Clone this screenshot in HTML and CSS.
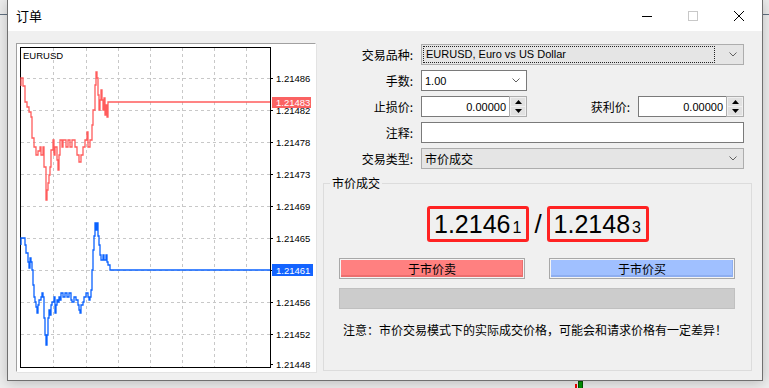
FILE: index.html
```html
<!DOCTYPE html>
<html lang="zh-CN">
<head>
<meta charset="utf-8">
<title>订单</title>
<link rel="stylesheet" href="styles.css">
</head>
<body>
<div class="desk">
  <div class="window">
    <div class="titlebar">
      <span class="title">订单</span>
      <div class="ctrls">
        <span class="cbtn"><svg width="10" height="10" viewBox="0 0 10 10"><path d="M0 5.5H10" stroke="#000" stroke-width="1"/></svg></span>
        <span class="cbtn"><svg width="10" height="10" viewBox="0 0 10 10"><rect x="0.5" y="0.5" width="9" height="9" fill="none" stroke="#c8c8c8"/></svg></span>
        <span class="cbtn"><svg width="10" height="10" viewBox="0 0 10 10"><path d="M0 0L10 10M10 0L0 10" stroke="#000" stroke-width="1"/></svg></span>
      </div>
    </div>
    <div class="body">
      <div class="chart">
        <svg width="298" height="327" viewBox="0 0 298 327">
          <g transform="translate(-17,-44)">
            <g class="grid">
              <path d="M53.5 48V367M86.5 48V367M118.5 48V367M150.5 48V367M182.5 48V367M214.5 48V367M246.5 48V367"/>
              <path d="M21 78.5H270M21 110.5H270M21 142.5H270M21 174.5H270M21 206.5H270M21 238.5H270M21 270.5H270M21 302.5H270M21 334.5H270"/>
            </g>
            <rect x="20.5" y="47.5" width="250" height="320" fill="none" stroke="#000"/>
            <path d="M270 78.5H273M270 110.5H273M270 142.5H273M270 174.5H273M270 206.5H273M270 238.5H273M270 270.5H273M270 302.5H273M270 334.5H273M270 364.5H273" stroke="#000"/>
            <g class="axis">
              <text x="276" y="82">1.21486</text>
              <text x="276" y="114">1.21482</text>
              <text x="276" y="146">1.21478</text>
              <text x="276" y="178">1.21473</text>
              <text x="276" y="210">1.21469</text>
              <text x="276" y="242">1.21465</text>
              <text x="276" y="306">1.21456</text>
              <text x="276" y="338">1.21452</text>
              <text x="276" y="368">1.21448</text>
            </g>
            <text class="sym" x="23" y="59">EURUSD</text>
            <polyline class="ask" points="21,86 21,78 23,78 23,86 25,86 25,102 27,102 27,107 29,107 29,112 31,112 31,117 32,117 32,138 34,138 34,147 36,147 36,155 38,155 38,151 40,151 40,147 41,147 41,155 43,155 43,147 44,147 44,167 46,167 46,200 47,200 47,190 48,190 48,183 49,183 49,175 50,175 50,167 51,167 51,150 53,150 53,140 54,140 54,155 55,155 55,147 57,147 57,160 58,160 58,170 59,170 59,155 60,155 60,140 62,140 62,147 63,147 63,140 66,140 66,147 68,147 68,140 70,140 70,147 72,147 72,140 75,140 75,147 77,147 77,155 79,155 79,162 81,162 81,155 83,155 83,147 85,147 85,140 87,140 87,132 88,132 88,147 90,147 90,140 92,140 92,125 93,125 93,110 95,110 95,85 96,85 96,72 97,72 97,78 98,78 98,95 99,95 99,110 100,110 100,100 101,100 101,90 102,90 102,100 103,100 103,110 104,110 104,98 105,98 105,115 106,115 106,105 107,105 107,117 108,117 108,102 270,102"/>
            <polyline class="bid" points="21,245 21,238 25,238 25,245 26,245 26,253 28,253 28,262 29,262 29,268 30,268 30,258 31,258 31,262 32,262 32,270 33,270 33,285 34,285 34,297 35,297 35,302 36,302 36,307 37,307 37,313 38,313 38,305 39,305 39,300 41,300 41,297 42,297 42,293 43,293 43,297 44,297 44,318 45,318 45,335 46,335 46,345 47,345 47,335 48,335 48,318 49,318 49,310 50,310 50,315 51,315 51,305 52,305 52,302 54,302 54,297 55,297 55,313 56,313 56,305 57,305 57,300 58,300 58,302 59,302 59,297 60,297 60,300 61,300 61,293 63,293 63,297 65,297 65,293 67,293 67,297 69,297 69,293 71,293 71,300 72,300 72,302 74,302 74,297 76,297 76,300 78,300 78,305 79,305 79,310 80,310 80,313 81,313 81,305 83,305 83,302 84,302 84,297 86,297 86,293 88,293 88,297 89,297 89,300 90,300 90,297 91,297 91,290 92,290 92,270 93,270 93,250 94,250 94,236 95,236 95,223 96,223 96,230 97,230 97,223 98,223 98,236 99,236 99,245 100,245 100,255 101,255 101,260 103,260 103,255 104,255 104,260 106,260 106,255 107,255 107,262 108,262 108,265 110,265 110,270 270,270"/>
            <rect x="272" y="97" width="39" height="11" fill="#fa6262"/>
            <text class="tag" x="276" y="106">1.21483</text>
            <rect x="272" y="264" width="41" height="12" fill="#1464ff"/>
            <text class="tag" x="276" y="274">1.21461</text>
          </g>
        </svg>
      </div>
      <div class="right">
        <div class="form">
          <div class="row">
            <span class="lbl">交易品种:</span>
            <div class="combo gray"><span class="focus">EURUSD, Euro vs US Dollar</span><svg class="chev" width="8" height="5" viewBox="0 0 8 5"><path d="M0.5 0.5L4 4L7.5 0.5" fill="none" stroke="#606060"/></svg></div>
          </div>
          <div class="row">
            <span class="lbl">手数:</span>
            <div class="combo white short"><span class="val">1.00</span><svg class="chev" width="8" height="5" viewBox="0 0 8 5"><path d="M0.5 0.5L4 4L7.5 0.5" fill="none" stroke="#606060"/></svg></div>
          </div>
          <div class="row">
            <span class="lbl">止损价:</span>
            <div class="pair">
              <div class="spinfield"><span class="num">0.00000</span><span class="spin"><span class="sb"><svg width="7" height="4" viewBox="0 0 7 4"><path d="M3.5 0L7 4H0Z"/></svg></span><span class="sb"><svg width="7" height="4" viewBox="0 0 7 4"><path d="M0 0H7L3.5 4Z"/></svg></span></span></div>
              <span class="lbl2">获利价:</span>
              <div class="spinfield"><span class="num">0.00000</span><span class="spin"><span class="sb"><svg width="7" height="4" viewBox="0 0 7 4"><path d="M3.5 0L7 4H0Z"/></svg></span><span class="sb"><svg width="7" height="4" viewBox="0 0 7 4"><path d="M0 0H7L3.5 4Z"/></svg></span></span></div>
            </div>
          </div>
          <div class="row">
            <span class="lbl">注释:</span>
            <div class="field"></div>
          </div>
          <div class="row">
            <span class="lbl">交易类型:</span>
            <div class="combo gray"><span class="val cjk">市价成交</span><svg class="chev" width="8" height="5" viewBox="0 0 8 5"><path d="M0.5 0.5L4 4L7.5 0.5" fill="none" stroke="#606060"/></svg></div>
          </div>
        </div>
        <fieldset class="group">
          <legend>市价成交</legend>
          <div class="gbody">
            <div class="prices">
              <span class="pbox">1.2146<small>1</small></span>
              <span class="slash">/</span>
              <span class="pbox">1.2148<small>3</small></span>
            </div>
            <div class="btns">
              <span class="btn"><span class="fill sell">于市价卖</span></span>
              <span class="btn"><span class="fill buy">于市价买</span></span>
            </div>
            <div class="bar"></div>
            <p class="note">注意：市价交易模式下的实际成交价格，可能会和请求价格有一定差异！</p>
          </div>
        </fieldset>
      </div>
    </div>
  </div>
  <div class="candles"><span class="cd red"></span><span class="cd green"></span></div>
</div>
</body>
</html>
```
FILE: styles.css
```css
* { box-sizing: border-box; }
html, body { margin: 0; height: 100%; }
body {
  background: linear-gradient(#ececec 0 14px, #617080 14px 15px, #eeeeee 15px);
  font-family: "Liberation Sans", "Noto Sans CJK SC", sans-serif;
  font-size: 11px;
  color: #000;
  overflow: hidden;
}
.desk { padding-left: 7px; }
.window {
  width: 756px;
  height: 381px;
  border: 1px solid #707070;
  border-top: 0;
  background: #f0f0f0;
  box-shadow: 0 2px 12px rgba(0,0,0,.22);
  display: flex;
  flex-direction: column;
}
.titlebar {
  height: 31px;
  flex: none;
  background: #fff;
  display: flex;
  align-items: center;
}
.title {
  flex: 1;
  padding-left: 8px;
  font: 13px "Noto Sans CJK SC", sans-serif;
  line-height: 31px;
}
.ctrls { display: flex; align-self: stretch; }
.cbtn { width: 46px; display: flex; align-items: center; justify-content: center; }
.cbtn svg { display: block; }

.body {
  flex: 1;
  display: flex;
  padding: 12px 10px 0 8px;
}
.chart {
  width: 300px;
  height: 329px;
  flex: none;
  background: #fff;
  border: 1px solid;
  border-color: #a0a0a0 #ffffff #ffffff #a0a0a0;
  box-shadow: 1px 1px 0 #e3e3e3;
}
.chart svg { display: block; }
.grid path { stroke: #c8c8c8; stroke-dasharray: 3 3; fill: none; }
.axis text, .tag { font: 9.5px "Liberation Sans", sans-serif; fill: #000; }
.tag { fill: #fff; }
.sym { font: 9.5px "Liberation Sans", sans-serif; fill: #000; }
.ask, .bid { fill: none; stroke-width: 1.3; stroke-linejoin: miter; }
.ask { stroke: #ff5c5c; }
.bid { stroke: #0a62ff; }

.right { width: 429px; margin-left: 7px; display: flex; flex-direction: column; }
.form { margin-top: 1px; display: flex; flex-direction: column; gap: 5px; }
.row {
  display: grid;
  grid-template-columns: 90px 323px;
  column-gap: 8px;
  height: 21px;
  align-items: center;
}
.lbl, .lbl2 {
  font: 12px "Noto Sans CJK SC", sans-serif;
  text-align: right;
  white-space: nowrap;
}
.combo, .field, .spinfield {
  height: 21px;
  border: 1px solid #7a7a7a;
  background: #fff;
  display: flex;
  align-items: center;
}
.combo.gray { background: #e5e5e5; border-color: #adadad; }
.combo.short { width: 106px; }
.combo .chev { flex: none; margin: 0 6px 0 auto; }
.focus {
  flex: 1;
  height: 17px;
  margin: 1px 14px 1px 1px;
  border: 1px dotted #222;
  padding-left: 2px;
  line-height: 15px;
  font-size: 11px;
  white-space: nowrap;
}
.val { padding-left: 3px; font-size: 11px; }
.val.cjk { font: 12px "Noto Sans CJK SC", sans-serif; }
.pair { display: flex; align-items: center; }
.lbl2 { margin-left: auto; margin-right: 8px; }
.spinfield { width: 106px; padding: 0; }
.num { flex: 1; text-align: right; padding-right: 3px; font-size: 11px; }
.spin {
  width: 18px;
  height: 21px;
  margin: -1px -1px -1px 0;
  border: 1px solid #adadad;
  background: #f0f0f0;
  display: flex;
  flex-direction: column;
  padding: 1px;
  gap: 1px;
}
.sb {
  flex: 1;
  background: #e1e1e1;
  display: flex;
  align-items: center;
  justify-content: center;
}
.sb svg { display: block; fill: #000; }

.group {
  margin: 6px 0 0 0;
  padding: 0;
  min-width: 0;
  height: 196px;
  border: 1px solid #dcdcdc;
}
.group legend {
  margin-left: 6px;
  padding: 0 2px;
  font: 12px "Noto Sans CJK SC", sans-serif;
  line-height: 16px;
}
.gbody { padding-top: 15px; }
.prices {
  display: flex;
  justify-content: center;
  align-items: center;
  gap: 5px;
  padding-left: 1px;
}
.pbox {
  height: 36px;
  border: 3px solid #ff2222;
  border-radius: 3px;
  padding: 0 5px 0 4px;
  display: flex;
  align-items: baseline;
  font: 25px "Liberation Sans", sans-serif;
  line-height: 30px;
}
.pbox small { font-size: 16px; margin-left: 2px; }
.slash { font: 26px "Liberation Sans", sans-serif; }
.btns {
  display: flex;
  justify-content: space-between;
  padding: 0 16px 0 15px;
  margin-top: 16px;
}
.btn {
  width: 186px;
  height: 21px;
  border: 1px solid #a8a8a8;
  padding: 1px;
  background: #f4f4f4;
  display: flex;
}
.fill {
  flex: 1;
  display: flex;
  align-items: center;
  justify-content: center;
  font: 12px "Noto Sans CJK SC", sans-serif;
}
.sell { background: #ff8080; box-shadow: inset -1px -2px 0 #ec6e6e; }
.buy { background: #a0c0ff; box-shadow: inset -1px -2px 0 #8eaef0; }
.bar {
  margin: 9px 16px 0 15px;
  height: 21px;
  background: #cccccc;
  border: 1px solid #c0c0c0;
}
.note {
  margin: 13px 0 0 19px;
  font: 12px "Noto Sans CJK SC", sans-serif;
  line-height: 16px;
  white-space: nowrap;
}
.candles { display: flex; margin-left: 568px; height: 8px; gap: 1px; }
.cd { width: 3px; height: 8px; }
.cd.red { background: #e00000; width: 2px; margin-top: 3px; }
.cd.green { background: #008a00; width: 5px; border: 1px solid #004d00; }
```
